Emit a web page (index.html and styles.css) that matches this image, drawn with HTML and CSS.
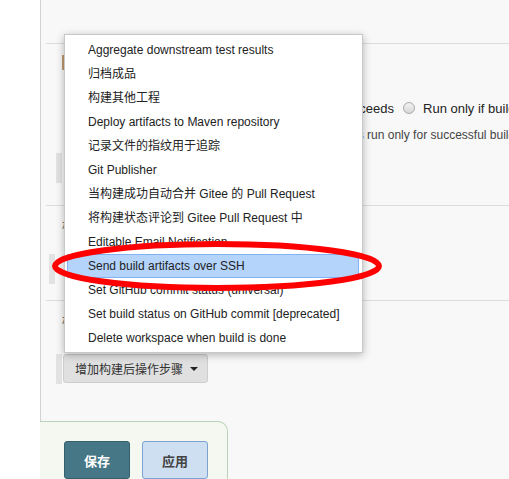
FILE: index.html
```html
<!DOCTYPE html>
<html lang="zh-CN">
<head>
    <meta charset="UTF-8">
    <title>Post-build Actions</title>
    <link rel="stylesheet" href="styles.css">
</head>
<body>
    <div class="page">
        <div class="side"></div>
        <main class="main">
            <div class="chunk chunk-first">
                <div class="chunk-mark"></div>
                <div class="run-row">
                    <span class="radio"></span><span class="run-label">Run only if build succeeds</span>
                    <span class="radio"></span><span class="run-label">Run only if build succeeds or is unstable</span>
                </div>
                <div class="help">Should the post-build steps run only for successful builds, etc.</div>
                <div class="handle"></div>
            </div>

            <div class="chunk chunk-second">
                <div class="chunk-title">构建后操作</div>
                <div class="handle handle-left"></div>
            </div>

            <div class="chunk chunk-third">
                <div class="chunk-title">构建后操作</div>
            </div>

            <div class="add-row">
                <div class="handle"></div>
                <button class="add-btn">增加构建后操作步骤 <span class="caret"></span></button>
            </div>

            <div class="bottom-bar">
                <button class="btn btn-save">保存</button>
                <button class="btn btn-apply">应用</button>
            </div>

            <!-- dropdown opened from the add button -->
            <ul class="menu">
                <li>Aggregate downstream test results</li>
                <li>归档成品</li>
                <li>构建其他工程</li>
                <li>Deploy artifacts to Maven repository</li>
                <li>记录文件的指纹用于追踪</li>
                <li>Git Publisher</li>
                <li>当构建成功自动合并 Gitee 的 Pull Request</li>
                <li>将构建状态评论到 Gitee Pull Request 中</li>
                <li>Editable Email Notification</li>
                <li class="selected">Send build artifacts over SSH</li>
                <li>Set GitHub commit status (universal)</li>
                <li>Set build status on GitHub commit [deprecated]</li>
                <li>Delete workspace when build is done</li>
            </ul>
        </main>
    </div>

    <svg class="mark-up" width="509" height="479" viewBox="0 0 509 479">
        <ellipse cx="217" cy="266" rx="162" ry="22" fill="none" stroke="#ff0000" stroke-width="6"/>
    </svg>
</body>
</html>
```

FILE: styles.css
```css
html, body {
    margin: 0;
    height: 100%;
    overflow: hidden;
}

body {
    font-family: "Liberation Sans", Arial, "Noto Sans CJK SC", sans-serif;
    font-size: 12px;
    color: #222;
    background-color: #fff;
    position: relative;
}

.page {
    display: flex;
    height: 100%;
}

.side {
    width: 40px;
    flex: none;
    border-right: 1px solid #d2d2d2;
    background-color: #fff;
}

.main {
    flex: 1;
    position: relative;
    background-color: #f8f8f8;
    padding-top: 43px;
}

.chunk {
    border-top: 1px solid #dcdcdc;
    margin-left: 5px;
}

.chunk-first {
    height: 161px;
}

.chunk-second {
    height: 94px;
}

.chunk-third {
    height: 48px;
}

.chunk-mark {
    width: 2px;
    height: 15px;
    margin: 11px 0 0 16px;
    background-color: #bf9a6e;
}

.chunk-title {
    margin: 11px 0 0 16px;
    height: 16px;
    font-size: 12px;
    color: #555;
}

.run-row {
    display: flex;
    align-items: center;
    white-space: nowrap;
    height: 16px;
    margin-top: 30px;
    padding-left: 177px;
    font-size: 13px;
    color: #222;
}

.radio {
    width: 10px;
    height: 10px;
    border: 1px solid #a9a9a9;
    border-radius: 50%;
    background: linear-gradient(#f2f2f2, #d8d8d8);
    margin-right: 8px;
    flex: none;
}

.run-label {
    margin-right: 9px;
}

.help {
    margin-top: 12px;
    height: 14px;
    line-height: 14px;
    padding-left: 173px;
    white-space: nowrap;
    color: #444;
}

.handle {
    width: 6px;
    height: 30px;
    margin: 11px 0 0 10px;
    background-color: #e2e2e2;
}

.handle-left {
    margin: 21px 0 0 3px;
}

.add-row {
    display: flex;
    align-items: flex-start;
    margin-top: 5px;
    margin-left: 15px;
}

.add-row .handle {
    margin: 0 1px 0 0;
    height: 30px;
}

.add-btn {
    height: 29px;
    padding: 0 9px 0 11px;
    border: 1px solid #cdcdcd;
    border-radius: 3px;
    background-color: #e0e0e0;
    color: #333;
    font-family: "Liberation Sans", Arial, "Noto Sans CJK SC", sans-serif;
    font-size: 12px;
    display: flex;
    align-items: center;
    gap: 5px;
}

.caret {
    width: 0;
    height: 0;
    border-left: 4px solid transparent;
    border-right: 4px solid transparent;
    border-top: 4px solid #222;
    margin-left: 2px;
}

.bottom-bar {
    margin-top: 37px;
    margin-left: -1px;
    width: 163px;
    height: 80px;
    padding: 19px 0 0 24px;
    background-color: #f4f8f0;
    border: 1px solid #b9d2b9;
    border-left: none;
    border-top-right-radius: 10px;
    display: flex;
    gap: 12px;
}

.btn {
    width: 66px;
    height: 38px;
    border-radius: 3px;
    font-family: "Liberation Sans", Arial, "Noto Sans CJK SC", sans-serif;
    font-size: 13px;
    font-weight: bold;
}

.btn-save {
    background-color: #467786;
    border: 1px solid #34606c;
    color: #fff;
}

.btn-apply {
    background-color: #cddff0;
    border: 1px solid #7ba2d2;
    color: #444;
}

.menu {
    position: absolute;
    left: 23px;
    top: 34px;
    width: 297px;
    margin: 0;
    padding: 3px 0 2px;
    list-style: none;
    background-color: #fff;
    border: 1px solid #c8c8c8;
    box-shadow: 0 2px 8px rgba(0, 0, 0, 0.28);
}

.menu li {
    height: 22px;
    line-height: 22px;
    margin: 0 3px 0 2px;
    padding-left: 20px;
    border: 1px solid transparent;
    white-space: nowrap;
    color: #222;
}

.menu li.selected {
    background-color: #b4d4fc;
    border-color: #82b2f4;
}

.mark-up {
    position: absolute;
    left: 0;
    top: 0;
    pointer-events: none;
}
```
